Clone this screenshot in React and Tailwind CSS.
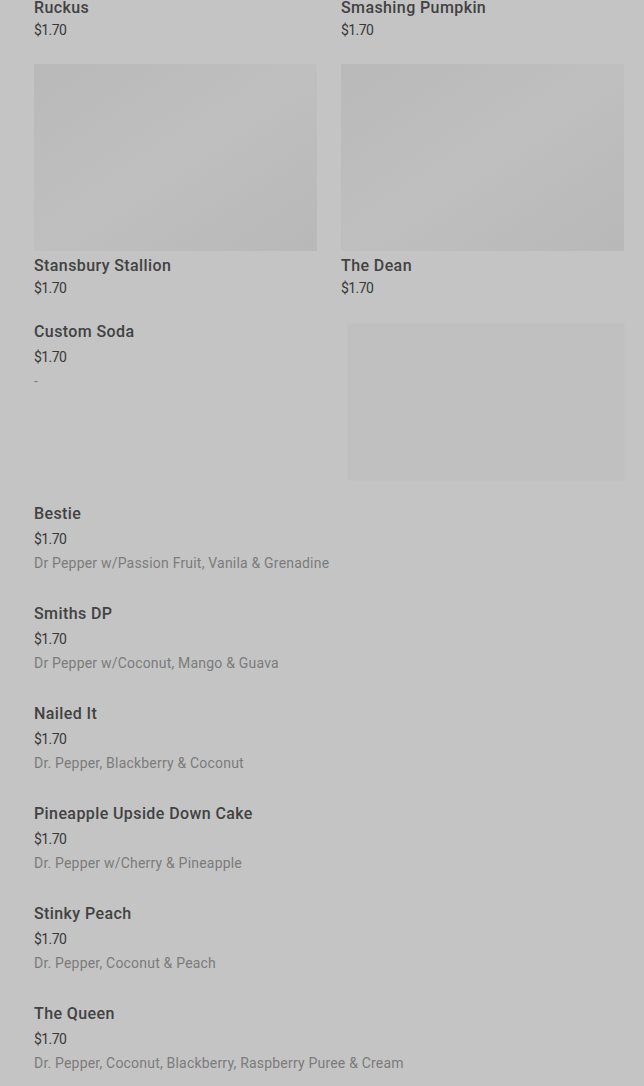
const gridTop = [
  { name: "Ruckus", price: "$1.70" },
  { name: "Smashing Pumpkin", price: "$1.70" },
];

const gridRow = [
  { name: "Stansbury Stallion", price: "$1.70" },
  { name: "The Dean", price: "$1.70" },
];

const list = [
  { name: "Bestie", price: "$1.70", desc: "Dr Pepper w/Passion Fruit, Vanila & Grenadine" },
  { name: "Smiths DP", price: "$1.70", desc: "Dr Pepper w/Coconut, Mango & Guava" },
  { name: "Nailed It", price: "$1.70", desc: "Dr. Pepper, Blackberry & Coconut" },
  { name: "Pineapple Upside Down Cake", price: "$1.70", desc: "Dr. Pepper w/Cherry & Pineapple" },
  { name: "Stinky Peach", price: "$1.70", desc: "Dr. Pepper, Coconut & Peach" },
  { name: "The Queen", price: "$1.70", desc: "Dr. Pepper, Coconut, Blackberry, Raspberry Puree & Cream" },
];

function Title({ children }) {
  return (
    <div className="text-[16px] leading-6 font-medium tracking-[0.4px] text-[#424242]">
      {children}
    </div>
  );
}

function Price({ children }) {
  return <div className="text-[14px] leading-5 tracking-[-0.6px] text-[#383838]">{children}</div>;
}

function Desc({ children }) {
  return <div className="text-[14px] leading-5 tracking-[0.2px] text-[#7b7b7b]">{children}</div>;
}

export default function App() {
  return (
    <div
      className="h-[1086px] overflow-hidden bg-[#c4c4c4] pl-[34px] pr-[20px]"
      style={{ fontFamily: "Roboto, 'Liberation Sans', sans-serif" }}
    >
      {/* Top row (scrolled off) */}
      <div className="-mt-[4px] grid grid-cols-2 gap-x-6">
        {gridTop.map((item) => (
          <div key={item.name}>
            <Title>{item.name}</Title>
            <Price>{item.price}</Price>
          </div>
        ))}
      </div>

      {/* Image row */}
      <div className="mt-6 grid grid-cols-2 gap-x-6">
        {gridRow.map((item) => (
          <div key={item.name}>
            <div className="h-[187px] bg-gradient-to-br from-[#b9b9b9] via-[#bfbfbf] to-[#b8b8b8]" />
            <div className="mt-[3px]">
              <Title>{item.name}</Title>
            </div>
            <Price>{item.price}</Price>
          </div>
        ))}
      </div>

      {/* Custom Soda */}
      <div className="mt-[22px] flex justify-between">
        <div>
          <Title>Custom Soda</Title>
          <div className="mt-[3px]">
            <Price>$1.70</Price>
          </div>
          <div className="mt-1">
            <Desc>-</Desc>
          </div>
        </div>
        <div className="mt-1 h-[156px] w-[276px] bg-[#c0c0c0] ring-1 ring-[#c2c2c2]" />
      </div>

      {/* List */}
      <div className="mt-[22px] flex flex-col">
        {list.map((item) => (
          <div key={item.name} className="h-[100px]">
            <Title>{item.name}</Title>
            <div className="mt-[3px]">
              <Price>{item.price}</Price>
            </div>
            <div className="mt-1">
              <Desc>{item.desc}</Desc>
            </div>
          </div>
        ))}
      </div>
    </div>
  );
}
